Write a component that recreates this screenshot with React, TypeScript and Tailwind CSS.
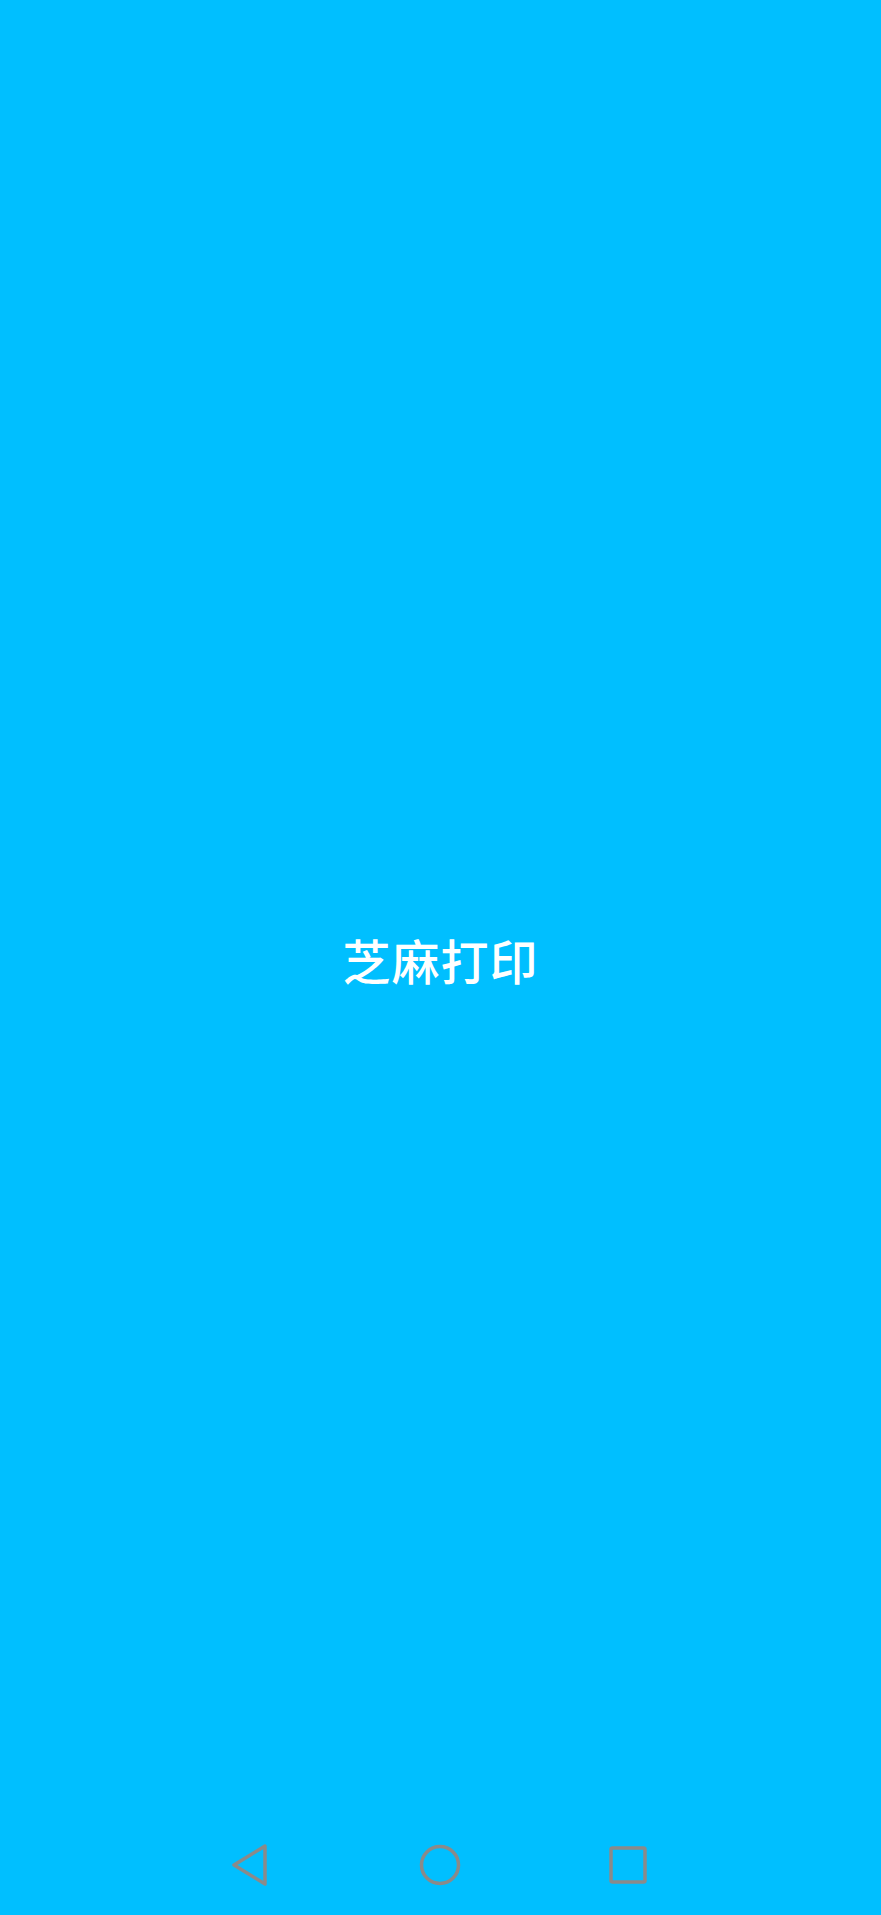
import React from "react";

export default function App() {
  return (
    <div className="relative w-[881px] h-[1915px] bg-[#00bfff] flex items-center justify-center overflow-hidden">
      <div
        className="text-white text-[48px] font-medium leading-none tracking-[1px] pt-[2px]"
        style={{ fontFamily: '"Noto Sans CJK SC", "Noto Sans", sans-serif' }}
      >
        芝麻打印
      </div>
      <div className="absolute left-0 right-0 bottom-0 h-[100px] flex items-center justify-center pr-[3px]">
        <svg width="38" height="44" viewBox="0 0 38 44" fill="none" stroke="#8a8a8a" strokeWidth="3.5" strokeLinejoin="round" className="mr-[150px]">
          <path d="M34 3 L3 22 L34 41 Z" />
        </svg>
        <svg width="42" height="42" viewBox="0 0 42 42" fill="none" stroke="#8a8a8a" strokeWidth="3.5" className="mr-[148px]">
          <circle cx="21" cy="21" r="18.5" />
        </svg>
        <svg width="38" height="38" viewBox="0 0 38 38" fill="none" stroke="#8a8a8a" strokeWidth="3.5">
          <rect x="2" y="2" width="34" height="34" rx="1.5" />
        </svg>
      </div>
    </div>
  );
}
